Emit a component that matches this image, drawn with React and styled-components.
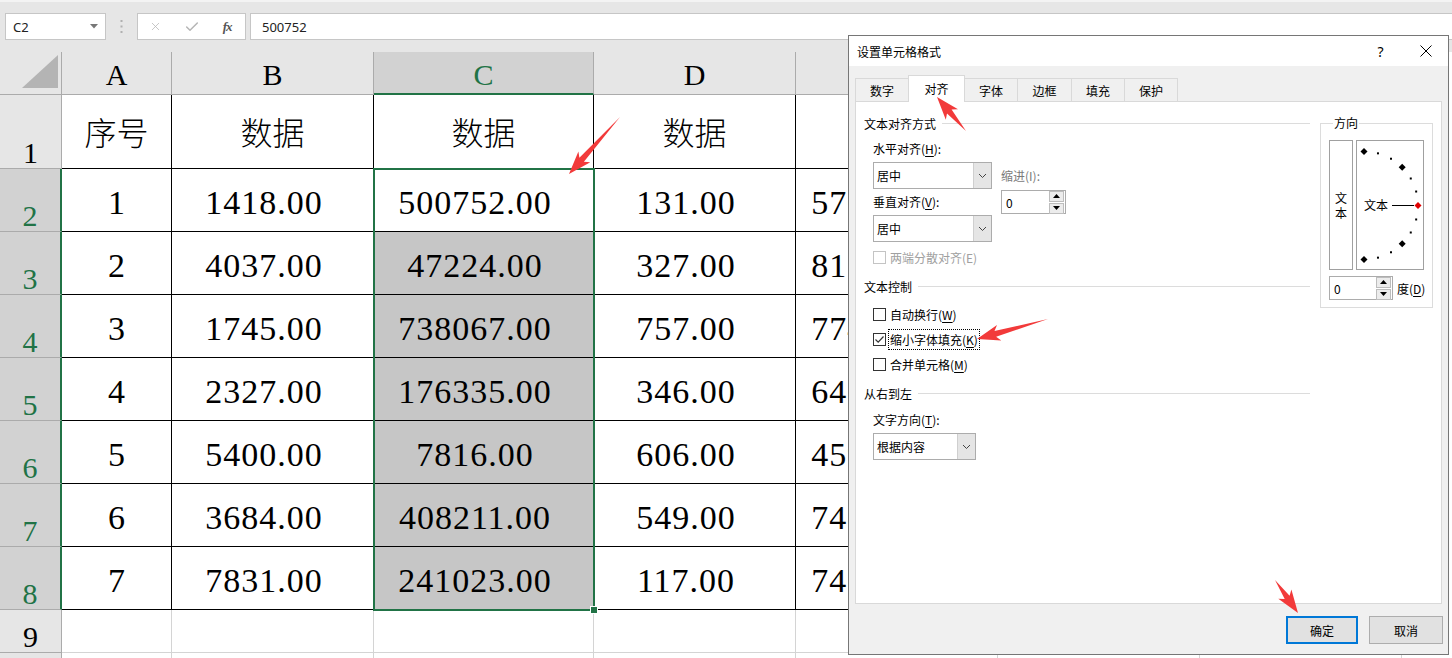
import React from 'react';
import styled, { createGlobalStyle } from 'styled-components';
import { X, Check } from 'lucide-react';

const GREEN = '#217346';
const SHEET_FONT = `"Liberation Serif", "Noto Sans CJK SC", serif`;
const UI_FONT = `"Noto Sans CJK SC", "Noto Sans", sans-serif`;

const GlobalStyle = createGlobalStyle`
  html, body {
    margin: 0;
    padding: 0;
    background: #fff;
    overflow: hidden;
  }
`;

const columns = [
  { key: 'A', width: 110 },
  { key: 'B', width: 202 },
  { key: 'C', width: 220, selected: true },
  { key: 'D', width: 202 },
  { key: 'E', width: 202 },
  { key: 'F', width: 202 },
  { key: 'G', width: 202 },
];

const records = [
  [1, 1418, 500752, 131, 570183],
  [2, 4037, 47224, 327, 815426],
  [3, 1745, 738067, 757, 774301],
  [4, 2327, 176335, 346, 646218],
  [5, 5400, 7816, 606, 459732],
  [6, 3684, 408211, 549, 748105],
  [7, 7831, 241023, 117, 743269],
];

const tabs = [
  { label: '数字', w: 54 },
  { label: '对齐', w: 57, active: true },
  { label: '字体', w: 54 },
  { label: '边框', w: 55 },
  { label: '填充', w: 54 },
  { label: '保护', w: 54 },
];

const arrows = [
  [620, 117, 569, 174],
  [966, 131, 937, 97],
  [1048, 319, 977, 339],
  [1275, 580, 1298, 613],
];

const arrowPoints = ([tx, ty, px, py]) => {
  const dx = px - tx;
  const dy = py - ty;
  const len = Math.hypot(dx, dy);
  const ux = dx / len;
  const uy = dy / len;
  const nx = -uy;
  const ny = ux;
  const head = 19;
  const bx = px - ux * head;
  const by = py - uy * head;
  const pts = [
    [tx, ty],
    [bx + nx * 3, by + ny * 3],
    [bx + nx * 8 - ux * 4, by + ny * 8 - uy * 4],
    [px, py],
    [bx - nx * 8 - ux * 4, by - ny * 8 - uy * 4],
    [bx - nx * 3, by - ny * 3],
  ];
  return pts.map(p => p.map(v => v.toFixed(1)).join(',')).join(' ');
};

/* ---------- page ---------- */

const Screen = styled.div`
  position: relative;
  width: 1452px;
  height: 658px;
  overflow: hidden;
  background: #fff;
`;

/* ---------- formula bar ---------- */

const Toolbar = styled.div`
  height: 52px;
  box-sizing: border-box;
  background: #e6e6e6;
  border-top: 2px solid #f3f3f3;
  display: flex;
  align-items: flex-start;
  padding: 11px 0 0 5px;
  font-family: "Noto Sans", "Liberation Sans", sans-serif;
  font-size: 13px;
  color: #222;
`;

const NameBox = styled.div`
  width: 101px;
  height: 27px;
  box-sizing: border-box;
  background: #fff;
  border: 1px solid #c6c6c6;
  display: flex;
  align-items: center;
  justify-content: space-between;
  padding: 0 7px 0 7px;
`;

const Grip = styled.div`
  width: 31px;
  height: 27px;
  display: flex;
  align-items: center;
  justify-content: center;
`;

const FxBox = styled.div`
  width: 109px;
  height: 27px;
  box-sizing: border-box;
  background: #fff;
  border: 1px solid #c6c6c6;
  display: flex;
  align-items: center;
`;

const FxSlot = styled.div`
  width: 36px;
  display: flex;
  align-items: center;
  justify-content: center;
  color: #b5b5b5;
`;

const FxText = styled.span`
  font-family: "Liberation Serif", serif;
  font-style: italic;
  font-weight: 700;
  font-size: 13px;
  color: #555;
  letter-spacing: -1px;
`;

const FormulaInput = styled.div`
  flex: 1;
  margin-left: 4px;
  height: 27px;
  box-sizing: border-box;
  background: #fff;
  border: 1px solid #c6c6c6;
  border-right: none;
  display: flex;
  align-items: center;
  padding-left: 11px;
`;

/* ---------- sheet ---------- */

const Sheet = styled.div`
  position: relative;
`;

const Row = styled.div`
  display: flex;
  height: ${p => p.$h}px;
`;

const Corner = styled.div`
  width: 62px;
  flex: none;
  box-sizing: border-box;
  background: #e6e6e6;
  border-right: 1px solid #ababab;
  border-bottom: 1px solid #ababab;
`;

const ColHead = styled.div`
  width: ${p => p.$w}px;
  flex: none;
  box-sizing: border-box;
  background: ${p => (p.$sel ? '#d2d2d2' : '#e6e6e6')};
  color: ${p => (p.$sel ? GREEN : '#000')};
  border-right: 1px solid #ababab;
  border-bottom: ${p => (p.$sel ? `2px solid ${GREEN}` : '1px solid #ababab')};
  display: flex;
  align-items: center;
  justify-content: center;
  padding-top: 4px;
  font-family: ${SHEET_FONT};
  font-size: 30px;
  line-height: 1;
`;

const RowHead = styled.div`
  width: 62px;
  flex: none;
  box-sizing: border-box;
  background: ${p => (p.$sel ? '#d2d2d2' : '#e6e6e6')};
  color: ${p => (p.$sel ? GREEN : '#000')};
  border-right: ${p => (p.$sel ? `2px solid ${GREEN}` : '1px solid #ababab')};
  border-bottom: 1px solid #ababab;
  display: flex;
  align-items: flex-end;
  justify-content: center;
  overflow: hidden;
  font-family: ${SHEET_FONT};
  font-size: 30px;
  line-height: 1;
`;

const Cell = styled.div`
  width: ${p => p.$w}px;
  flex: none;
  box-sizing: border-box;
  background: ${p => (p.$shade ? '#c6c6c6' : '#fff')};
  border-right: 1px solid ${p => (p.$boxed ? '#000' : '#d4d4d4')};
  border-bottom: 1px solid ${p => (p.$boxed ? '#000' : '#d4d4d4')};
  display: flex;
  align-items: center;
  justify-content: center;
  padding-top: ${p => (p.$cjk ? 4 : 6)}px;
  padding-right: ${p => (p.$num ? 17 : 0)}px;
  font-family: ${SHEET_FONT};
  font-size: ${p => (p.$cjk ? 32 : 34)}px;
  font-weight: ${p => (p.$cjk ? 300 : 400)};
  letter-spacing: ${p => (p.$num ? 1 : 0)}px;
  line-height: 1;
  color: #000;
  white-space: nowrap;
  overflow: hidden;
`;

const Selection = styled.div`
  position: absolute;
  left: ${p => p.$x}px;
  top: ${p => p.$y}px;
  width: ${p => p.$w}px;
  height: ${p => p.$h}px;
  box-sizing: border-box;
  border: 2px solid ${GREEN};
  pointer-events: none;

  &::after {
    content: '';
    position: absolute;
    right: -5px;
    bottom: -5px;
    width: 6px;
    height: 6px;
    background: ${GREEN};
    border: 1px solid #fff;
  }
`;

/* ---------- dialog ---------- */

const Dialog = styled.div`
  position: absolute;
  left: 848px;
  top: 35px;
  width: 601px;
  height: 620px;
  box-sizing: border-box;
  border: 1px solid #767676;
  background: #f0f0f0;
  display: flex;
  flex-direction: column;
  font-family: ${UI_FONT};
  font-size: 12px;
  color: #000;
  z-index: 5;
`;

const TitleBar = styled.div`
  height: 30px;
  flex: none;
  background: #fff;
  display: flex;
  align-items: center;
  padding-left: 8px;
`;

const Title = styled.div`
  flex: 1;
  padding-top: 1px;
`;

const TitleButton = styled.div`
  width: 45px;
  height: 30px;
  display: flex;
  align-items: center;
  justify-content: center;
  font-family: "Noto Sans", sans-serif;
  font-size: 14px;
`;

const DialogBody = styled.div`
  flex: 1;
  display: flex;
  flex-direction: column;
  padding: 9px 6px 0 6px;
`;

const Tabs = styled.div`
  display: flex;
  align-items: flex-end;
  height: 27px;
  margin-bottom: -1px;
  position: relative;
  z-index: 1;
`;

const Tab = styled.div`
  width: ${p => p.$w}px;
  height: ${p => (p.$active ? 27 : 24)}px;
  box-sizing: border-box;
  margin-left: -1px;
  background: ${p => (p.$active ? '#fff' : '#f0f0f0')};
  border: 1px solid #d9d9d9;
  border-bottom: ${p => (p.$active ? 'none' : '1px solid #d9d9d9')};
  display: flex;
  align-items: center;
  justify-content: center;
  padding-bottom: ${p => (p.$active ? 2 : 0)}px;
  position: relative;
  z-index: ${p => (p.$active ? 2 : 1)};

  &:first-child {
    margin-left: 0;
  }
`;

const Panel = styled.div`
  height: 503px;
  box-sizing: border-box;
  background: #fff;
  border: 1px solid #d9d9d9;
  display: flex;
  align-items: flex-start;
  padding: 13px 0 0 8px;
`;

const MainCol = styled.div`
  width: 446px;
  display: flex;
  flex-direction: column;
`;

const SectionHead = styled.div`
  display: flex;
  align-items: center;
  gap: 6px;
  height: 16px;
  margin-top: ${p => p.$mt || 0}px;

  &::after {
    content: '';
    flex: 1;
    height: 1px;
    background: #dcdcdc;
  }
`;

const AlignBlock = styled.div`
  display: flex;
  gap: 9px;
  margin: 10px 0 0 9px;
`;

const Stack = styled.div`
  display: flex;
  flex-direction: column;
  padding-top: ${p => p.$pt || 0}px;
`;

const FieldLabel = styled.div`
  height: 16px;
  line-height: 16px;
  color: ${p => (p.$muted ? '#7a7a7a' : '#000')};
  margin-top: ${p => p.$mt || 0}px;
  margin-left: ${p => p.$ml || 0}px;
  white-space: nowrap;

  u {
    text-decoration-thickness: 1px;
    text-underline-offset: 2px;
  }
`;

const Select = styled.div`
  width: ${p => p.$w}px;
  height: 27px;
  box-sizing: border-box;
  margin-top: 5px;
  margin-left: ${p => p.$ml || 0}px;
  border: 1px solid #acacac;
  background: #fff;
  display: flex;
  align-items: stretch;
`;

const SelectText = styled.div`
  flex: 1;
  display: flex;
  align-items: center;
  padding-left: 3px;
`;

const SelectButton = styled.div`
  width: 17px;
  background: #e5e5e5;
  border-left: 1px solid #cfcfcf;
  display: flex;
  align-items: center;
  justify-content: center;
`;

const Spin = styled.div`
  width: ${p => p.$w}px;
  height: 24px;
  flex: none;
  box-sizing: border-box;
  margin-top: ${p => p.$mt || 0}px;
  border: 1px solid #acacac;
  background: #fff;
  display: flex;
  align-items: center;
  padding: 0 1px 0 4px;
`;

const SpinValue = styled.div`
  flex: 1;
`;

const SpinButtons = styled.div`
  width: 15px;
  display: flex;
  flex-direction: column;
  gap: 1px;
`;

const SpinButton = styled.div`
  height: 9px;
  border: 1px solid #bdbdbd;
  background: #ececec;
  display: flex;
  align-items: center;
  justify-content: center;
`;

const CheckList = styled.div`
  display: flex;
  flex-direction: column;
  gap: 4px;
  margin: ${p => p.$mt || 0}px 0 0 9px;
`;

const CheckRow = styled.div`
  height: 21px;
  display: flex;
  align-items: center;
  gap: 2px;
  color: ${p => (p.$disabled ? '#a0a0a0' : '#000')};
`;

const Box = styled.div`
  width: 13px;
  height: 13px;
  box-sizing: border-box;
  border: 1px solid ${p => (p.$disabled ? '#c4c4c4' : '#333')};
  background: #fff;
  display: flex;
  align-items: center;
  justify-content: center;
`;

const CheckText = styled.span`
  height: 19px;
  line-height: 19px;
  padding: 0 1px;
  border: 1px dotted ${p => (p.$focus ? '#000' : 'transparent')};

  u {
    text-decoration-thickness: 1px;
    text-underline-offset: 2px;
  }
`;

const Orientation = styled.fieldset`
  margin: 0 0 0 10px;
  width: 113px;
  box-sizing: border-box;
  min-width: 0;
  padding: 9px 0 7px 8px;
  border: 1px solid #dcdcdc;
`;

const Legend = styled.legend`
  padding: 0 1px;
  margin-left: 4px;
  line-height: 16px;
`;

const OrientBoxes = styled.div`
  display: flex;
  gap: 3px;
`;

const VerticalBox = styled.div`
  width: 24px;
  height: 130px;
  box-sizing: border-box;
  border: 1px solid #a0a0a0;
  display: flex;
  flex-direction: column;
  align-items: center;
  justify-content: center;
  line-height: 15px;
`;

const ArcBox = styled.div`
  width: 68px;
  height: 130px;
  box-sizing: border-box;
  border: 1px solid #a0a0a0;
`;

const DegreeRow = styled.div`
  display: flex;
  align-items: center;
  gap: 4px;
  margin-top: 6px;
  white-space: nowrap;

  u {
    text-decoration-thickness: 1px;
    text-underline-offset: 2px;
  }
`;

const ButtonRow = styled.div`
  display: flex;
  justify-content: flex-end;
  gap: 11px;
  margin-top: 12px;
  margin-right: -1px;
`;

const DialogButton = styled.div`
  width: ${p => p.$w}px;
  height: 28px;
  box-sizing: border-box;
  background: #e1e1e1;
  border: ${p => (p.$primary ? '2px solid #0078d7' : '1px solid #adadad')};
  display: flex;
  align-items: center;
  justify-content: center;
`;

const Annotations = styled.svg`
  position: absolute;
  left: 0;
  top: 0;
  pointer-events: none;
  z-index: 10;
`;

/* ---------- small drawings ---------- */

const Chevron = () => (
  <svg width="9" height="6" viewBox="0 0 9 6">
    <path d="M1 1 L4.5 4.5 L8 1" fill="none" stroke="#444" strokeWidth="1" />
  </svg>
);

const Tri = ({ up }) => (
  <svg width="7" height="4" viewBox="0 0 7 4">
    <path d={up ? 'M0 4 L3.5 0 L7 4 Z' : 'M0 0 L3.5 4 L7 0 Z'} fill="#000" />
  </svg>
);

const SpinBox = ({ w, mt, value }) => (
  <Spin $w={w} $mt={mt}>
    <SpinValue>{value}</SpinValue>
    <SpinButtons>
      <SpinButton><Tri up /></SpinButton>
      <SpinButton><Tri /></SpinButton>
    </SpinButtons>
  </Spin>
);

const Dropdown = ({ w, children, ml }) => (
  <Select $w={w} $ml={ml}>
    <SelectText>{children}</SelectText>
    <SelectButton><Chevron /></SelectButton>
  </Select>
);

const CheckItem = ({ checked, disabled, focus, children }) => (
  <CheckRow $disabled={disabled}>
    <Box $disabled={disabled}>
      {checked && (
        <svg width="11" height="11" viewBox="0 0 11 11">
          <path d="M1.5 5.5 L4.2 8.2 L9.5 2.5" fill="none" stroke="#333" strokeWidth="1.2" />
        </svg>
      )}
    </Box>
    <CheckText $focus={focus}>{children}</CheckText>
  </CheckRow>
);

const Diamond = ({ x, y, color = '#000' }) => (
  <path d={`M${x} ${y - 3.5} L${x + 3.5} ${y} L${x} ${y + 3.5} L${x - 3.5} ${y} Z`} fill={color} />
);

const ArcDial = () => {
  const cx = 7;
  const cy = 64.5;
  const r = 54;
  const marks = [];
  for (let deg = 90; deg >= -90; deg -= 15) {
    const a = (deg * Math.PI) / 180;
    const x = cx + r * Math.cos(a);
    const y = cy - r * Math.sin(a);
    if (deg === 0) marks.push(<Diamond key={deg} x={x} y={y} color="#e00000" />);
    else if (deg % 45 === 0) marks.push(<Diamond key={deg} x={x} y={y} />);
    else marks.push(<rect key={deg} x={x - 1} y={y - 1} width="2" height="2" fill="#000" />);
  }
  return (
    <svg width="66" height="128" viewBox="0 0 66 128">
      {marks}
      <text x="7" y="69" fontSize="12" fontFamily={UI_FONT} fill="#000">文本</text>
      <line x1="35" y1="64.5" x2="57" y2="64.5" stroke="#000" strokeWidth="1" />
    </svg>
  );
};

const fmt = n => `${n}.00`;

export default function App() {
  const rowHeights = [74, 63, 63, 63, 63, 63, 63, 63, 43, 10];
  const selX = 62 + columns[0].width + columns[1].width - 1;
  const selY = 43 + rowHeights[0] - 1;
  const selW = columns[2].width + 2;
  const selH = 63 * 7 + 2;

  const renderCells = rowIdx => {
    const boxed = rowIdx < 8;
    return columns.map((col, ci) => {
      const inTable = boxed && ci < 5;
      let content = null;
      let num = false;
      let cjk = false;
      if (rowIdx === 0 && ci < 5) {
        content = ci === 0 ? '序号' : '数据';
        cjk = true;
      } else if (rowIdx >= 1 && rowIdx <= 7 && ci < 5) {
        const v = records[rowIdx - 1][ci];
        content = ci === 0 ? v : fmt(v);
        num = ci !== 0;
      }
      return (
        <Cell
          key={col.key}
          $w={col.width}
          $boxed={inTable}
          $shade={ci === 2 && rowIdx >= 2 && rowIdx <= 7}
          $num={num}
          $cjk={cjk}
        >
          {content}
        </Cell>
      );
    });
  };

  return (
    <Screen>
      <GlobalStyle />
      <Toolbar>
        <NameBox>
          <span>C2</span>
          <svg width="8" height="5" viewBox="0 0 8 5">
            <path d="M0 0 L8 0 L4 4.5 Z" fill="#777" />
          </svg>
        </NameBox>
        <Grip>
          <svg width="3" height="13" viewBox="0 0 3 13">
            <rect x="0.5" y="0" width="2" height="2" fill="#b0b0b0" />
            <rect x="0.5" y="5.5" width="2" height="2" fill="#b0b0b0" />
            <rect x="0.5" y="11" width="2" height="2" fill="#b0b0b0" />
          </svg>
        </Grip>
        <FxBox>
          <FxSlot><X size={13} strokeWidth={1.4} /></FxSlot>
          <FxSlot><Check size={16} strokeWidth={2.2} /></FxSlot>
          <FxSlot><FxText>fx</FxText></FxSlot>
        </FxBox>
        <FormulaInput>500752</FormulaInput>
      </Toolbar>

      <Sheet>
        <Row $h={43}>
          <Corner>
            <svg width="61" height="42" viewBox="0 0 61 42">
              <path d="M22 36 L58 36 L58 3 Z" fill="#b4b4b4" />
            </svg>
          </Corner>
          {columns.map(col => (
            <ColHead key={col.key} $w={col.width} $sel={col.selected}>{col.key}</ColHead>
          ))}
        </Row>
        {rowHeights.map((h, ri) => (
          <Row key={ri} $h={h}>
            <RowHead $sel={ri >= 1 && ri <= 7}>{h > 20 ? ri + 1 : null}</RowHead>
            {renderCells(ri)}
          </Row>
        ))}
        <Selection $x={selX} $y={selY} $w={selW} $h={selH} />
      </Sheet>

      <Dialog>
        <TitleBar>
          <Title>设置单元格格式</Title>
          <TitleButton>?</TitleButton>
          <TitleButton>
            <svg width="12" height="12" viewBox="0 0 12 12">
              <path d="M0.5 0.5 L11.5 11.5 M11.5 0.5 L0.5 11.5" stroke="#000" strokeWidth="1" />
            </svg>
          </TitleButton>
        </TitleBar>
        <DialogBody>
          <Tabs>
            {tabs.map(t => (
              <Tab key={t.label} $w={t.w} $active={t.active}>{t.label}</Tab>
            ))}
          </Tabs>
          <Panel>
            <MainCol>
              <SectionHead>文本对齐方式</SectionHead>
              <AlignBlock>
                <Stack>
                  <FieldLabel>水平对齐(<u>H</u>):</FieldLabel>
                  <Dropdown w={119}>居中</Dropdown>
                  <FieldLabel $mt={5}>垂直对齐(<u>V</u>):</FieldLabel>
                  <Dropdown w={119}>居中</Dropdown>
                </Stack>
                <Stack $pt={27}>
                  <FieldLabel $muted>缩进(I):</FieldLabel>
                  <SpinBox w={65} mt={6} value="0" />
                </Stack>
              </AlignBlock>
              <CheckList $mt={5}>
                <CheckItem disabled>两端分散对齐(E)</CheckItem>
              </CheckList>
              <SectionHead $mt={10}>文本控制</SectionHead>
              <CheckList $mt={10}>
                <CheckItem>自动换行(<u>W</u>)</CheckItem>
                <CheckItem checked focus>缩小字体填充(<u>K</u>)</CheckItem>
                <CheckItem>合并单元格(<u>M</u>)</CheckItem>
              </CheckList>
              <SectionHead $mt={10}>从右到左</SectionHead>
              <FieldLabel $mt={11} $ml={9}>文字方向(<u>T</u>):</FieldLabel>
              <Dropdown w={103} ml={9}>根据内容</Dropdown>
            </MainCol>
            <Orientation>
              <Legend>方向</Legend>
              <OrientBoxes>
                <VerticalBox>
                  <span>文</span>
                  <span>本</span>
                </VerticalBox>
                <ArcBox>
                  <ArcDial />
                </ArcBox>
              </OrientBoxes>
              <DegreeRow>
                <SpinBox w={64} value="0" />
                <span>度(<u>D</u>)</span>
              </DegreeRow>
            </Orientation>
          </Panel>
          <ButtonRow>
            <DialogButton $w={72} $primary>确定</DialogButton>
            <DialogButton $w={74}>取消</DialogButton>
          </ButtonRow>
        </DialogBody>
      </Dialog>

      <Annotations width="1452" height="658" viewBox="0 0 1452 658">
        {arrows.map((a, i) => (
          <polygon key={i} points={arrowPoints(a)} fill="#f23a3a" />
        ))}
      </Annotations>
    </Screen>
  );
}
